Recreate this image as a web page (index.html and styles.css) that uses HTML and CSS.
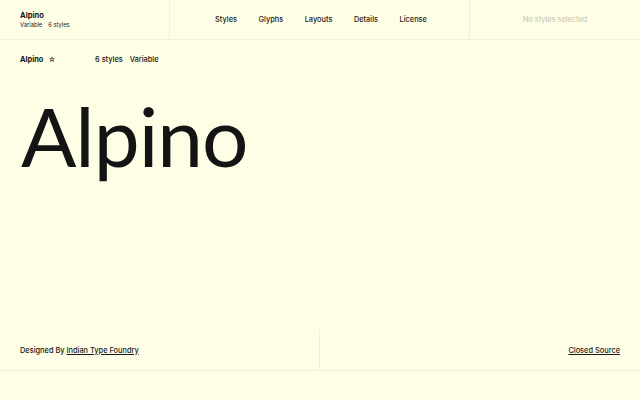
FILE: index.html
```html
<!DOCTYPE html>
<html lang="en">
<head>
<meta charset="utf-8">
<title>Alpino</title>
<link rel="stylesheet" href="styles.css">
</head>
<body>
<div class="page">
  <header class="topbar">
    <div class="brand">
      <div class="brand-name">Alpino</div>
      <div class="brand-meta"><span>Variable</span><span>6 styles</span></div>
    </div>
    <nav class="nav">
      <a href="#">Styles</a>
      <a href="#">Glyphs</a>
      <a href="#">Layouts</a>
      <a href="#">Details</a>
      <a href="#">License</a>
    </nav>
    <div class="selection">No styles selected</div>
  </header>
  <main class="main">
    <div class="meta-row">
      <div class="meta-name">Alpino <span class="star">☆</span></div>
      <div class="meta-info"><span>6 styles</span><span>Variable</span></div>
    </div>
    <h1 class="hero">Alpino</h1>
  </main>
  <footer class="footer">
    <div class="foot-left">Designed By <a href="#">Indian Type Foundry</a></div>
    <div class="foot-right"><a href="#">Closed Source</a></div>
  </footer>
</div>
</body>
</html>
```
FILE: styles.css
```css
html, body {
  margin: 0;
  padding: 0;
  background: #fefee6;
}
body {
  font-family: Inter, "Liberation Sans", sans-serif;
  color: #141414;
}
.page {
  height: 400px;
  display: flex;
  flex-direction: column;
}
.topbar {
  display: grid;
  grid-template-columns: 170px 300px 170px;
  height: 39px;
  border-bottom: 1px solid #efefd9;
}
.brand {
  padding: 0 20px;
  display: flex;
  flex-direction: column;
  justify-content: center;
  border-right: 1px solid #efefd9;
}
.brand-name {
  font-size: 7.6px;
  font-weight: 700;
  line-height: 10px;
}
.brand-meta {
  font-size: 5.8px;
  line-height: 8px;
  display: flex;
  gap: 6px;
  color: #222;
}
.nav {
  display: flex;
  align-items: center;
  justify-content: center;
  gap: 21.5px;
  padding-left: 3px;
  border-right: 1px solid #efefd9;
}
.nav a {
  font-size: 7.4px;
  font-weight: 500;
  color: #1a1a1a;
  text-decoration: none;
}
.selection {
  display: flex;
  align-items: center;
  justify-content: center;
  font-size: 7.4px;
  color: #c4c4ae;
}
.main {
  flex: 1;
  padding: 0 20px;
}
.meta-row {
  display: flex;
  align-items: center;
  padding-top: 15px;
  height: 10px;
  font-size: 7.4px;
  line-height: 10px;
}
.meta-name {
  font-weight: 700;
  width: 75px;
}
.star {
  font-weight: 400;
  margin-left: 3px;
}
.meta-info {
  display: flex;
  gap: 7px;
  font-weight: 500;
}
.hero {
  margin: 29px 0 0 1px;
  font-family: Lato, sans-serif;
  font-weight: 400;
  font-size: 82px;
  line-height: 1;
  letter-spacing: -1px;
  color: #141414;
}
.footer {
  display: grid;
  grid-template-columns: 320px 320px;
  height: 40px;
  border-bottom: 1px solid #efefd9;
  margin-bottom: 29px;
  font-size: 7.4px;
  font-weight: 500;
}
.footer a {
  color: #1a1a1a;
  text-decoration: underline;
  text-underline-offset: 1px;
}
.foot-left {
  display: flex;
  align-items: center;
  padding: 0 20px;
  border-right: 1px solid #efefd9;
  white-space: pre;
}
.foot-right {
  display: flex;
  align-items: center;
  justify-content: flex-end;
  padding: 0 20px;
}
```
